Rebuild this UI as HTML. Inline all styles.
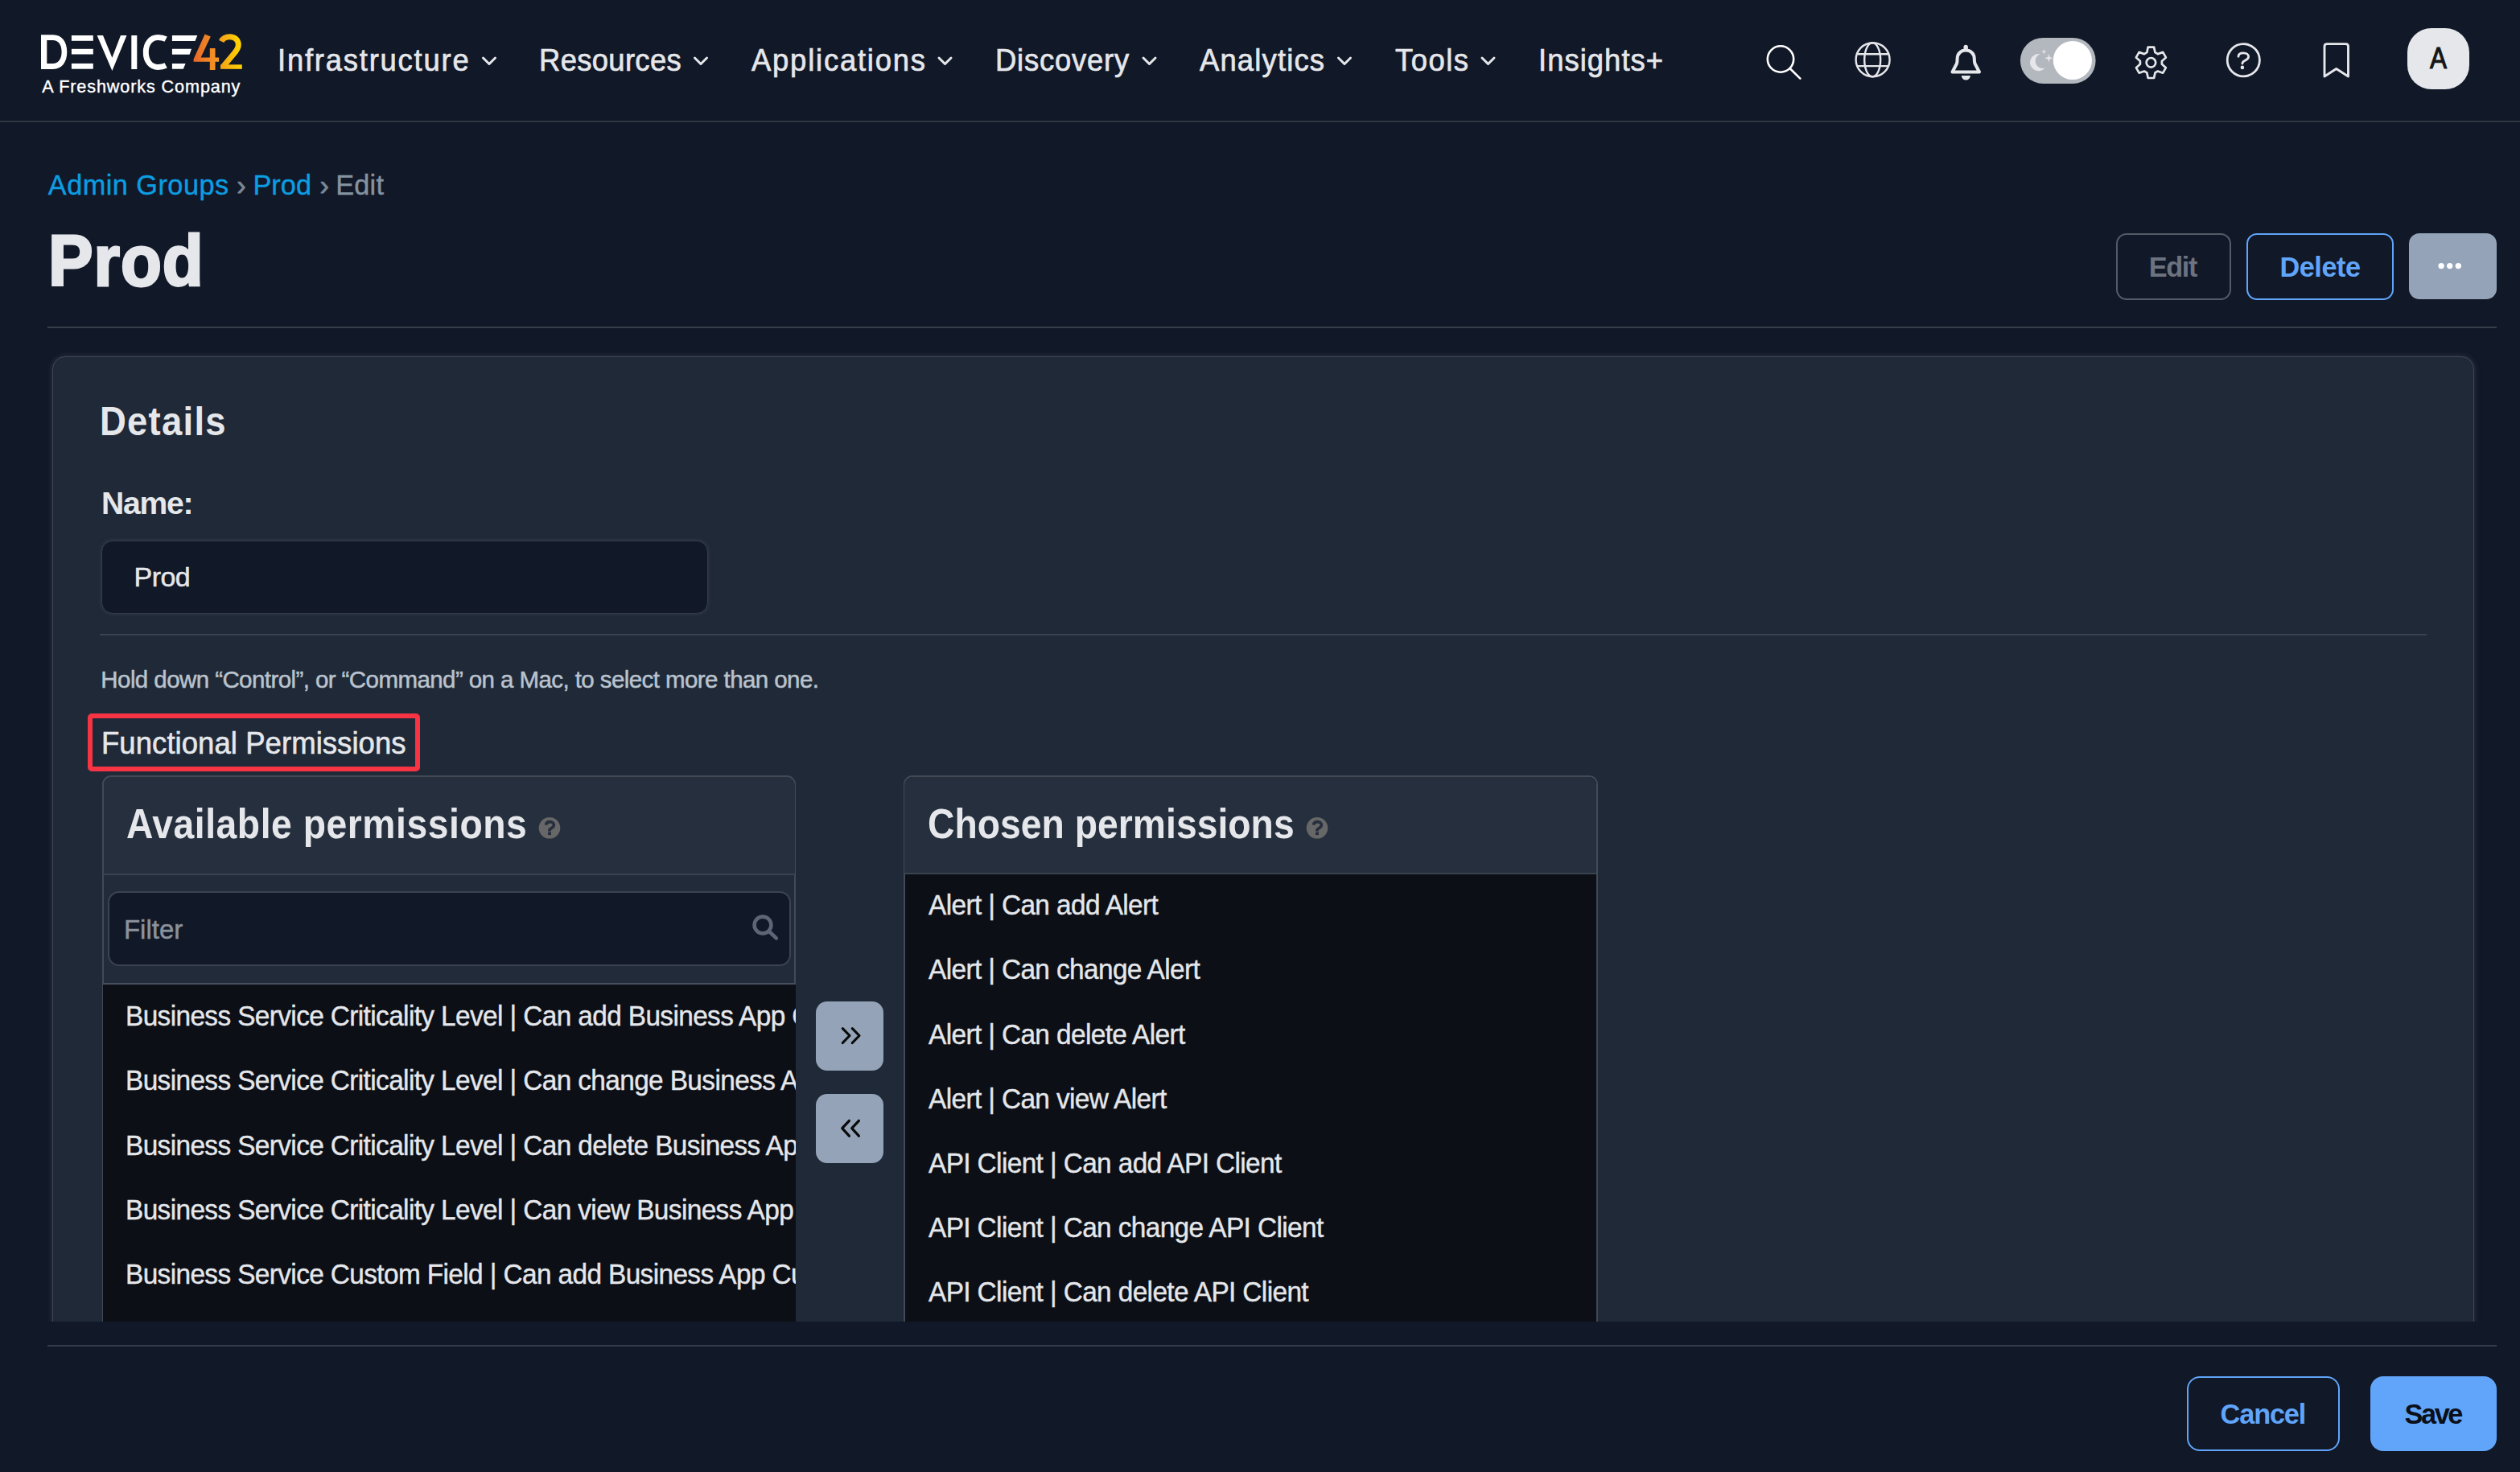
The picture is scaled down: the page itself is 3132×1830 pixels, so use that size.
<!DOCTYPE html>
<html><head><meta charset="utf-8"><title>Prod | Admin Groups</title>
<style>
html,body{margin:0;padding:0;}
body{width:3132px;height:1830px;overflow:hidden;background:#111827;position:relative;font-family:"Liberation Sans",sans-serif;}
.t{position:absolute;white-space:nowrap;}
.abs{position:absolute;box-sizing:border-box;}
@media (max-width:1700px){html{zoom:0.5;}}
</style></head><body>
<!-- nav border -->
<div class="abs" style="left:0;top:150px;width:3132px;height:2px;background:#2f3541;"></div>
<!-- page header rule -->
<div class="abs" style="left:59px;top:406px;width:3044px;height:2px;background:#363d4a;"></div>
<!-- top buttons -->
<div class="abs" style="left:2630px;top:290px;width:143px;height:83px;border:2.5px solid #545b67;border-radius:13px;"></div>
<div class="abs" style="left:2792px;top:290px;width:183px;height:83px;border:2.5px solid #60a5fa;border-radius:13px;"></div>
<div class="abs" style="left:2994px;top:290px;width:109px;height:82px;background:#94a3b8;border-radius:13px;"></div>
<svg class="abs" style="left:0;top:0" width="3132" height="160" viewBox="0 0 3132 160">
  <!-- logo D -->
  <path fill="#fff" d="M51 43.2 H66 C77 43.2 83.3 52 83.3 64.6 C83.3 77.2 77 86 66 86 H51 Z M58.3 50.1 V78.9 H65.5 C72.5 78.9 76.6 73.5 76.6 64.5 C76.6 55.5 72.5 50.1 65.5 50.1 Z"/>
  <rect fill="#fff" x="88.9" y="44" width="26.9" height="6.8"/>
  <rect fill="#fff" x="88.9" y="60.8" width="26.9" height="6.7"/>
  <rect fill="#fff" x="88.9" y="78.9" width="26.9" height="6.8"/>
  <path fill="#fff" d="M120.6 44 H128 L139.4 71.7 L150 44 H157.5 L139.4 88 Z"/>
  <rect fill="#fff" x="163.3" y="44" width="7" height="42"/>
  <path fill="none" stroke="#fff" stroke-width="7" d="M206.2 48.6 C203 46.9 199.5 46.5 196.2 46.5 C187.5 46.5 181.3 54 181.3 65 C181.3 76 187.5 83.5 196.2 83.5 C199.5 83.5 203 83 206.2 81.4"/>
  <path fill="#fff" d="M213.9 44 H245.3 L242.5 51 H213.9 Z M213.9 60.8 H238 L235.6 67.7 H213.9 Z M213.9 79 H230.6 L227.8 85.8 H213.9 Z"/>
  <defs>
    <linearGradient id="g4" x1="0" y1="0" x2="1" y2="0"><stop offset="0" stop-color="#e8692a"/><stop offset="1" stop-color="#f59a22"/></linearGradient>
    <linearGradient id="g2" x1="0" y1="0" x2="1" y2="0"><stop offset="0" stop-color="#f5a318"/><stop offset="1" stop-color="#ffd200"/></linearGradient>
  </defs>
  <path fill="url(#g4)" d="M254.6 42.5 L261.8 45.6 L249.6 71.4 H260.8 V60 H267.5 V71.4 H272.1 V76.7 H267.5 V87 H260.8 V76.7 H240.6 V73.5 Z"/>
  <path fill="none" stroke="url(#g2)" stroke-width="7" d="M275.2 51.5 C277 47.5 281 45.8 285.5 45.8 C292 45.8 296.3 50 296.3 55.8 C296.3 60 294 63 290.5 67 L277.5 82.5"/>
  <path fill="url(#g2)" d="M274 80.3 H300.8 V85.8 H274 Z"/>
  <!-- chevrons -->
  <g fill="none" stroke="#e5e7eb" stroke-width="3" stroke-linecap="round" stroke-linejoin="round">
    <path d="M600.5 72 L608 79.5 L615.5 72"/>
    <path d="M863.5 72 L871 79.5 L878.5 72"/>
    <path d="M1167 72 L1174.5 79.5 L1182 72"/>
    <path d="M1421 72 L1428.5 79.5 L1436 72"/>
    <path d="M1663.5 72 L1671 79.5 L1678.5 72"/>
    <path d="M1842 72 L1849.5 79.5 L1857 72"/>
  </g>
  <!-- search -->
  <g fill="none" stroke="#ffffff" stroke-width="2.6" stroke-linecap="round">
    <circle cx="2213" cy="73.5" r="16.2"/>
    <path d="M2224.8 85.3 L2237.4 97.6"/>
  </g>
  <!-- globe -->
  <g fill="none" stroke="#e5e7eb" stroke-width="2.4">
    <circle cx="2327.6" cy="74.3" r="21"/>
    <ellipse cx="2327.2" cy="74.3" rx="10" ry="21"/>
    <path d="M2308.5 67.2 H2347 M2308.5 82.1 H2347"/>
  </g>
  <!-- bell -->
  <g fill="none" stroke="#e5e7eb" stroke-width="4" stroke-linejoin="round">
    <path d="M2426.5 89.5 L2432 79 C2432.5 77.5 2432.6 76 2432.6 73 C2432.6 66.8 2437 62.6 2443.2 62.6 C2449.4 62.6 2453.8 66.8 2453.8 73 C2453.8 76 2454 77.5 2454.5 79 L2460 89.5 Z"/>
  </g>
  <rect fill="#e5e7eb" x="2440.5" y="55.8" width="5.4" height="7" rx="2.7"/>
  <path fill="#e5e7eb" d="M2437.8 94 H2448.9 A5.55 5.55 0 0 1 2437.8 94 Z"/>
  <!-- toggle -->
  <rect x="2510.9" y="46.9" width="93.7" height="57.1" rx="28.55" fill="#b3b7be"/>
  <circle cx="2575.9" cy="75" r="24.1" fill="#ffffff"/>
  <path fill="#e5e7eb" d="M2535.5 67.2 A10.6 10.6 0 1 0 2541.8 84.3 A9 9 0 0 1 2535.5 67.2 Z"/>
  <path fill="#e5e7eb" d="M2546.4 67 L2547.6 71.1 L2551.7 72.3 L2547.6 73.5 L2546.4 77.6 L2545.2 73.5 L2541.1 72.3 L2545.2 71.1 Z"/>
  <path fill="#e5e7eb" d="M2540.3 60.8 L2541.1 63.5 L2543.8 64.3 L2541.1 65.1 L2540.3 67.8 L2539.5 65.1 L2536.8 64.3 L2539.5 63.5 Z"/>
  <!-- gear -->
  <g fill="none" stroke="#e5e7eb" stroke-width="2.7" stroke-linejoin="round">
    <polygon points="2668.3,65.2 2669.7,58.6 2677.1,58.6 2678.5,65.2 2681.8,67.1 2688.2,64.9 2691.9,71.4 2686.9,75.9 2686.9,79.7 2691.9,84.2 2688.2,90.7 2681.8,88.5 2678.5,90.4 2677.1,97.0 2669.7,97.0 2668.3,90.4 2665.0,88.5 2658.6,90.7 2654.9,84.2 2659.9,79.7 2659.9,75.9 2654.9,71.4 2658.6,64.9 2665.0,67.1"/>
    <circle cx="2673.4" cy="77.8" r="5.8"/>
  </g>
  <!-- help -->
  <g fill="none" stroke="#e5e7eb" stroke-width="2.8" stroke-linecap="round">
    <circle cx="2788.3" cy="74.75" r="20.1"/>
    <path d="M2782 70.3 C2782 67.3 2784.5 65.9 2788.2 65.9 C2792 65.9 2794.6 67.8 2794.6 70.5 C2794.6 73 2792.5 74.2 2790.2 75.3 C2788 76.3 2786.9 77.3 2786.9 79"/>
  </g>
  <circle cx="2786.9" cy="83.9" r="2.3" fill="#e5e7eb"/>
  <!-- bookmark -->
  <path fill="none" stroke="#e5e7eb" stroke-width="2.9" stroke-linejoin="round" d="M2889 95 V57.5 A3 3 0 0 1 2892 54.6 H2915.5 A3 3 0 0 1 2918.5 57.5 V95 L2903.7 85.5 Z"/>
</svg>
<!-- avatar -->
<div class="abs" style="left:2992px;top:34.6px;width:77px;height:76.4px;background:#e5e7eb;border-radius:30px;"></div>
<svg class="abs" style="left:3020px;top:320px" width="50" height="20" viewBox="0 0 50 20">
  <circle cx="14.1" cy="10.6" r="3.7" fill="#fff"/><circle cx="24.7" cy="10.6" r="3.7" fill="#fff"/><circle cx="35.3" cy="10.6" r="3.7" fill="#fff"/>
</svg>

<!-- CARD -->
<div class="abs" style="left:65px;top:443px;width:3010px;height:1260px;background:#1f2937;border:1.5px solid #414753;border-radius:16px;box-shadow:0 0 6px 1px rgba(70,78,94,0.45);"></div>
<!-- name input -->
<div class="abs" style="left:126px;top:672px;width:754px;height:91px;background:#111827;border:1.5px solid #353c49;border-radius:14px;box-shadow:0 0 4px 1px rgba(70,78,94,0.4);"></div>
<!-- divider -->
<div class="abs" style="left:124px;top:787.5px;width:2892px;height:2px;background:#3a4150;"></div>
<!-- red box -->
<div class="abs" style="left:109.2px;top:887.2px;width:413px;height:71.7px;border:6.5px solid #f63444;border-radius:5px;"></div>

<!-- available panel -->
<div class="abs" style="left:127px;top:964px;width:862px;height:740px;background:#222b39;border:2px solid #434a56;border-radius:11px;"></div>
<div class="abs" style="left:128.5px;top:965.5px;width:859px;height:121px;background:#252f3d;border-radius:10px 10px 0 0;"></div>
<div class="abs" style="left:128px;top:1086px;width:860px;height:2px;background:#3a4250;"></div>
<div class="abs" style="left:134px;top:1108px;width:848.5px;height:93px;background:#111827;border:2px solid #3c4350;border-radius:14px;"></div>
<svg class="abs" style="left:920px;top:1125px" width="60" height="60" viewBox="0 0 60 60">
  <g fill="none" stroke="#5d6576" stroke-width="4.6" stroke-linecap="round"><circle cx="28" cy="25" r="10.4"/><path d="M36 33 L44.8 41.4"/></g>
</svg>
<div class="abs" style="left:128px;top:1222px;width:860px;height:2.5px;background:#485060;"></div>
<div class="abs" style="left:128px;top:1224px;width:861px;height:480px;background:#0c0f16;overflow:hidden;">
<div class="t" style="left:27.80px;top:22.15px;font-size:35.5px;line-height:35.5px;font-weight:400;color:#e5e7eb;letter-spacing:-0.65px;transform:scaleX(0.94);transform-origin:0 0;-webkit-text-stroke:0.4px #e5e7eb;">Business Service Criticality Level | Can add Business App Criticality Level</div>
<div class="t" style="left:27.80px;top:102.35px;font-size:35.5px;line-height:35.5px;font-weight:400;color:#e5e7eb;letter-spacing:-0.65px;transform:scaleX(0.94);transform-origin:0 0;-webkit-text-stroke:0.4px #e5e7eb;">Business Service Criticality Level | Can change Business App Criticality Level</div>
<div class="t" style="left:27.80px;top:182.55px;font-size:35.5px;line-height:35.5px;font-weight:400;color:#e5e7eb;letter-spacing:-0.65px;transform:scaleX(0.94);transform-origin:0 0;-webkit-text-stroke:0.4px #e5e7eb;">Business Service Criticality Level | Can delete Business App Criticality Level</div>
<div class="t" style="left:27.80px;top:262.75px;font-size:35.5px;line-height:35.5px;font-weight:400;color:#e5e7eb;letter-spacing:-0.65px;transform:scaleX(0.94);transform-origin:0 0;-webkit-text-stroke:0.4px #e5e7eb;">Business Service Criticality Level | Can view Business App Criticality Level</div>
<div class="t" style="left:27.80px;top:342.95px;font-size:35.5px;line-height:35.5px;font-weight:400;color:#e5e7eb;letter-spacing:-0.65px;transform:scaleX(0.94);transform-origin:0 0;-webkit-text-stroke:0.4px #e5e7eb;">Business Service Custom Field | Can add Business App Custom Field</div>
<div class="t" style="left:27.80px;top:423.15px;font-size:35.5px;line-height:35.5px;font-weight:400;color:#e5e7eb;letter-spacing:-0.65px;transform:scaleX(0.94);transform-origin:0 0;-webkit-text-stroke:0.4px #e5e7eb;">Business Service Custom Field | Can change Business App Custom Field</div>
</div>
<!-- move buttons -->
<div class="abs" style="left:1014px;top:1245px;width:84px;height:86px;background:#94a3b8;border-radius:14px;"></div>
<div class="abs" style="left:1014px;top:1360px;width:84px;height:86px;background:#94a3b8;border-radius:14px;"></div>
<svg class="abs" style="left:1000px;top:1235px" width="110" height="220" viewBox="0 0 110 220">
  <g fill="none" stroke="#0a0a0a" stroke-width="3.2" stroke-linecap="round" stroke-linejoin="round">
    <path d="M47.3 43.6 L56 52.5 L47.3 61.5"/><path d="M59.3 43.6 L68 52.5 L59.3 61.5"/>
    <path d="M55.4 158.3 L46.7 167.7 L55.4 177.2"/><path d="M67.4 158.3 L58.7 167.7 L67.4 177.2"/>
  </g>
</svg>

<!-- chosen panel -->
<div class="abs" style="left:1122.5px;top:964px;width:863px;height:740px;background:#0c0f16;border:2px solid #434a56;border-radius:11px;"></div>
<div class="abs" style="left:1124px;top:965.5px;width:860px;height:119.5px;background:#252f3d;border-radius:10px 10px 0 0;"></div>
<div class="abs" style="left:1124px;top:1084.5px;width:860px;height:2px;background:#3a4250;"></div>
<div class="abs" style="left:1124px;top:1086px;width:860px;height:600px;overflow:hidden;">
<div class="t" style="left:29.80px;top:22.15px;font-size:35.5px;line-height:35.5px;font-weight:400;color:#e5e7eb;letter-spacing:-0.65px;transform:scaleX(0.94);transform-origin:0 0;-webkit-text-stroke:0.4px #e5e7eb;">Alert | Can add Alert</div>
<div class="t" style="left:29.80px;top:102.35px;font-size:35.5px;line-height:35.5px;font-weight:400;color:#e5e7eb;letter-spacing:-0.65px;transform:scaleX(0.94);transform-origin:0 0;-webkit-text-stroke:0.4px #e5e7eb;">Alert | Can change Alert</div>
<div class="t" style="left:29.80px;top:182.55px;font-size:35.5px;line-height:35.5px;font-weight:400;color:#e5e7eb;letter-spacing:-0.65px;transform:scaleX(0.94);transform-origin:0 0;-webkit-text-stroke:0.4px #e5e7eb;">Alert | Can delete Alert</div>
<div class="t" style="left:29.80px;top:262.75px;font-size:35.5px;line-height:35.5px;font-weight:400;color:#e5e7eb;letter-spacing:-0.65px;transform:scaleX(0.94);transform-origin:0 0;-webkit-text-stroke:0.4px #e5e7eb;">Alert | Can view Alert</div>
<div class="t" style="left:29.80px;top:342.95px;font-size:35.5px;line-height:35.5px;font-weight:400;color:#e5e7eb;letter-spacing:-0.65px;transform:scaleX(0.94);transform-origin:0 0;-webkit-text-stroke:0.4px #e5e7eb;">API Client | Can add API Client</div>
<div class="t" style="left:29.80px;top:423.15px;font-size:35.5px;line-height:35.5px;font-weight:400;color:#e5e7eb;letter-spacing:-0.65px;transform:scaleX(0.94);transform-origin:0 0;-webkit-text-stroke:0.4px #e5e7eb;">API Client | Can change API Client</div>
<div class="t" style="left:29.80px;top:503.35px;font-size:35.5px;line-height:35.5px;font-weight:400;color:#e5e7eb;letter-spacing:-0.65px;transform:scaleX(0.94);transform-origin:0 0;-webkit-text-stroke:0.4px #e5e7eb;">API Client | Can delete API Client</div>
<div class="t" style="left:29.80px;top:583.55px;font-size:35.5px;line-height:35.5px;font-weight:400;color:#e5e7eb;letter-spacing:-0.65px;transform:scaleX(0.94);transform-origin:0 0;-webkit-text-stroke:0.4px #e5e7eb;">API Client | Can view API Client</div>
</div>

<!-- help icons -->
<svg class="abs" style="left:660px;top:1006px" width="46" height="46" viewBox="0 0 46 46">
  <circle cx="23" cy="23.3" r="13.3" fill="#676767"/>
  <path fill="none" stroke="#252f3d" stroke-width="3.6" d="M18.3 19.5 C19 16.8 21 15.6 23.4 15.6 C26.4 15.6 28.4 17.4 28.4 19.8 C28.4 22.8 24.8 23.3 23 25.5 V27.6"/>
  <rect x="21" y="28.4" width="4" height="3.7" fill="#252f3d"/>
</svg>
<svg class="abs" style="left:1613.5px;top:1006px" width="46" height="46" viewBox="0 0 46 46">
  <circle cx="23" cy="23.3" r="13.3" fill="#676767"/>
  <path fill="none" stroke="#252f3d" stroke-width="3.6" d="M18.3 19.5 C19 16.8 21 15.6 23.4 15.6 C26.4 15.6 28.4 17.4 28.4 19.8 C28.4 22.8 24.8 23.3 23 25.5 V27.6"/>
  <rect x="21" y="28.4" width="4" height="3.7" fill="#252f3d"/>
</svg>

<!-- text -->
<div class="t" style="left:52.20px;top:96.92px;font-size:21.6px;line-height:21.6px;font-weight:400;color:#ffffff;letter-spacing:0.894px;-webkit-text-stroke:0.4px #ffffff;">A Freshworks Company</div>
<div class="t" style="left:345.39px;top:54.68px;font-size:39.6px;line-height:39.6px;font-weight:400;color:#e5e7eb;letter-spacing:1.938px;-webkit-text-stroke:0.7px #e5e7eb;transform:scaleX(0.92);transform-origin:0 0;">Infrastructure</div>
<div class="t" style="left:670.49px;top:54.68px;font-size:39.6px;line-height:39.6px;font-weight:400;color:#e5e7eb;letter-spacing:0.359px;-webkit-text-stroke:0.7px #e5e7eb;transform:scaleX(0.92);transform-origin:0 0;">Resources</div>
<div class="t" style="left:933.95px;top:54.68px;font-size:39.6px;line-height:39.6px;font-weight:400;color:#e5e7eb;letter-spacing:1.946px;-webkit-text-stroke:0.7px #e5e7eb;transform:scaleX(0.92);transform-origin:0 0;">Applications</div>
<div class="t" style="left:1236.89px;top:54.68px;font-size:39.6px;line-height:39.6px;font-weight:400;color:#e5e7eb;letter-spacing:0.860px;-webkit-text-stroke:0.7px #e5e7eb;transform:scaleX(0.92);transform-origin:0 0;">Discovery</div>
<div class="t" style="left:1491.35px;top:54.68px;font-size:39.6px;line-height:39.6px;font-weight:400;color:#e5e7eb;letter-spacing:1.267px;-webkit-text-stroke:0.7px #e5e7eb;transform:scaleX(0.92);transform-origin:0 0;">Analytics</div>
<div class="t" style="left:1734.35px;top:54.68px;font-size:39.6px;line-height:39.6px;font-weight:400;color:#e5e7eb;letter-spacing:1.637px;-webkit-text-stroke:0.7px #e5e7eb;transform:scaleX(0.92);transform-origin:0 0;">Tools</div>
<div class="t" style="left:1911.59px;top:54.68px;font-size:39.6px;line-height:39.6px;font-weight:400;color:#e5e7eb;letter-spacing:1.132px;-webkit-text-stroke:0.7px #e5e7eb;transform:scaleX(0.92);transform-origin:0 0;">Insights+</div>
<div class="t" style="left:3019.55px;top:53.57px;font-size:37.6px;line-height:37.6px;font-weight:400;color:#151515;-webkit-text-stroke:1.1px #151515;transform:scaleX(0.84);transform-origin:0 0;">A</div>
<div class="t" style="left:59.80px;top:213.27px;font-size:34.3px;line-height:34.3px;font-weight:400;color:#0c9de2;letter-spacing:0.467px;-webkit-text-stroke:0.4px #0c9de2;">Admin Groups</div>
<div class="t" style="left:294.30px;top:213.27px;font-size:34.3px;line-height:34.3px;font-weight:400;color:#7b8794;-webkit-text-stroke:0.8px #7b8794;">›</div>
<div class="t" style="left:314.40px;top:213.27px;font-size:34.3px;line-height:34.3px;font-weight:400;color:#0c9de2;letter-spacing:0.043px;-webkit-text-stroke:0.4px #0c9de2;">Prod</div>
<div class="t" style="left:397.40px;top:213.27px;font-size:34.3px;line-height:34.3px;font-weight:400;color:#7b8794;-webkit-text-stroke:0.8px #7b8794;">›</div>
<div class="t" style="left:417.20px;top:213.27px;font-size:34.3px;line-height:34.3px;font-weight:400;color:#8593a0;letter-spacing:0.243px;-webkit-text-stroke:0.4px #8593a0;">Edit</div>
<div class="t" style="left:60.32px;top:280.45px;font-size:89.6px;line-height:89.6px;font-weight:700;color:#e5e7eb;letter-spacing:1.008px;-webkit-text-stroke:3px #e5e7eb;transform:scaleX(0.93);transform-origin:0 0;">Prod</div>
<div class="t" style="left:2670.80px;top:315.27px;font-size:34.3px;line-height:34.3px;font-weight:700;color:#6b7280;letter-spacing:-1.418px;">Edit</div>
<div class="t" style="left:2833.40px;top:315.27px;font-size:34.3px;line-height:34.3px;font-weight:700;color:#60a5fa;letter-spacing:-0.433px;">Delete</div>
<div class="t" style="left:124.40px;top:498.65px;font-size:50.5px;line-height:50.5px;font-weight:700;color:#e5e7eb;letter-spacing:1.395px;transform:scaleX(0.9);transform-origin:0 0;">Details</div>
<div class="t" style="left:126.00px;top:606.10px;font-size:39.1px;line-height:39.1px;font-weight:700;color:#e5e7eb;letter-spacing:-1.234px;">Name:</div>
<div class="t" style="left:166.55px;top:700.22px;font-size:34px;line-height:34px;font-weight:400;color:#e5e7eb;letter-spacing:-0.570px;-webkit-text-stroke:0.5px #e5e7eb;">Prod</div>
<div class="t" style="left:125.35px;top:830.43px;font-size:29.5px;line-height:29.5px;font-weight:400;color:#bac2cd;letter-spacing:-0.578px;-webkit-text-stroke:0.5px #bac2cd;">Hold down “Control”, or “Command” on a Mac, to select more than one.</div>
<div class="t" style="left:125.81px;top:904.33px;font-size:39.3px;line-height:39.3px;font-weight:400;color:#e5e7eb;letter-spacing:0.041px;-webkit-text-stroke:0.6px #e5e7eb;transform:scaleX(0.93);transform-origin:0 0;">Functional Permissions</div>
<div class="t" style="left:156.60px;top:999.39px;font-size:51.4px;line-height:51.4px;font-weight:700;color:#e5e7eb;letter-spacing:0.612px;transform:scaleX(0.9);transform-origin:0 0;">Available permissions</div>
<div class="t" style="left:1152.80px;top:999.39px;font-size:51.4px;line-height:51.4px;font-weight:700;color:#e5e7eb;letter-spacing:0.045px;transform:scaleX(0.9);transform-origin:0 0;">Chosen permissions</div>
<div class="t" style="left:153.95px;top:1138.87px;font-size:33px;line-height:33px;font-weight:400;color:#8b929c;-webkit-text-stroke:0.5px #8b929c;">Filter</div>

<!-- footer cover -->
<div class="abs" style="left:0;top:1643px;width:3132px;height:187px;background:#111827;"></div>
<div class="abs" style="left:59px;top:1672px;width:3044px;height:2px;background:#363d4a;"></div>
<div class="abs" style="left:2718px;top:1711px;width:190px;height:93px;border:2.5px solid #60a5fa;border-radius:16px;"></div>
<div class="abs" style="left:2946px;top:1711px;width:157px;height:93px;background:#60a5fa;border-radius:16px;"></div>
<div class="t" style="left:2759.60px;top:1741.17px;font-size:34.3px;line-height:34.3px;font-weight:700;color:#60a5fa;letter-spacing:-1.148px;">Cancel</div>
<div class="t" style="left:2988.60px;top:1741.17px;font-size:34.3px;line-height:34.3px;font-weight:700;color:#0b0f19;letter-spacing:-2.441px;">Save</div>
</body></html>
